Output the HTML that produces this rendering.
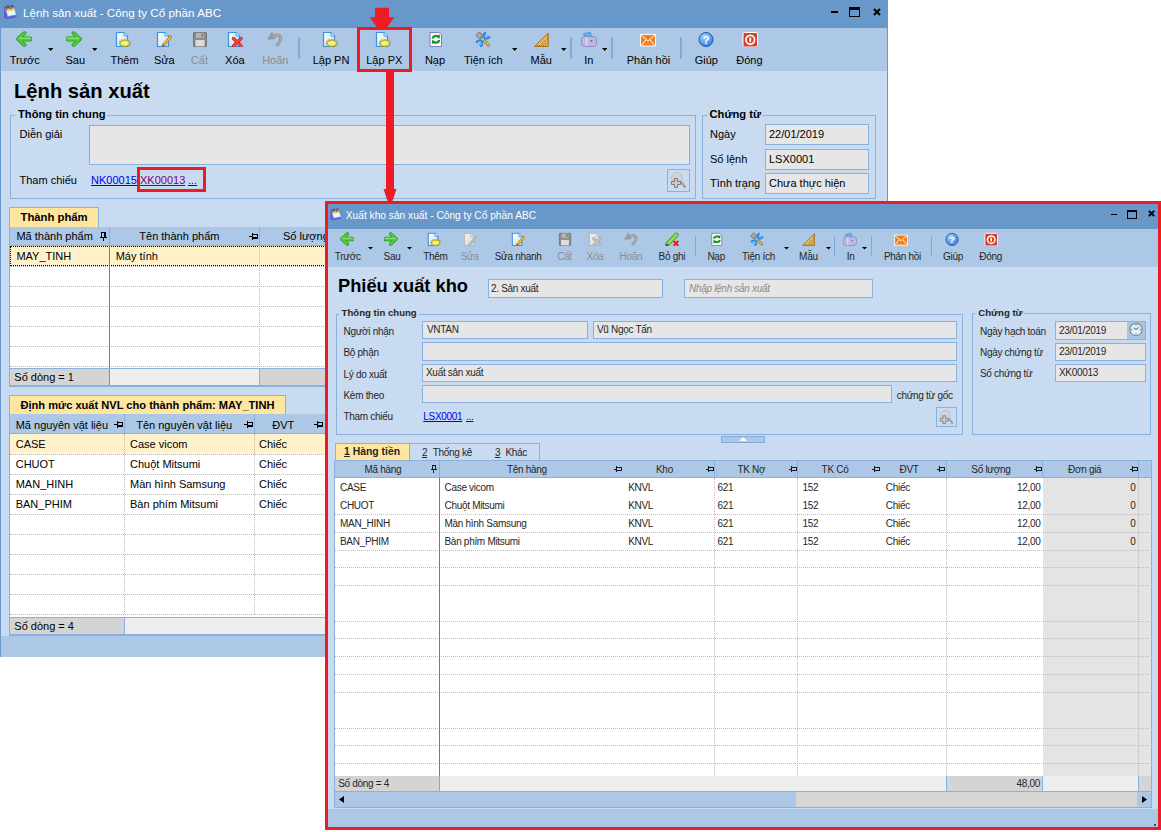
<!DOCTYPE html>
<html><head><meta charset="utf-8"><style>
html,body{margin:0;padding:0;}
body{width:1161px;height:832px;overflow:hidden;position:relative;background:#fff;font-family:"Liberation Sans", sans-serif;}
div{box-sizing:border-box;}
</style></head><body>
<div style="position:absolute;left:0px;top:0px;width:888px;height:657px;background:#c9dbf0"></div>
<div style="position:absolute;left:0px;top:0px;width:888px;height:28px;background:#6897c9"></div>
<svg style="position:absolute;left:0px;top:0px" width="24" height="24" viewBox="0 0 24 24"><path d="M4 6.5 L14 5.8 L16.8 15.5 L16.2 17.5 L7 19 L4 17.8 Z" fill="#6a58d0"/><path d="M5.6 8.6 L13.8 7 L16.6 14.8 L7.6 16.6 Z" fill="#eaf4ff" stroke="#48a4ec" stroke-width="0.7"/><path d="M5.6 8.6 L13.8 7 L14.7 9.9 L6.4 11.4 Z" fill="#f6d040"/><path d="M7 10 C6 5.5 8.6 3.6 9 9 M11 9.5 C10.4 4.5 13 3.6 13.2 8.6" fill="none" stroke="#505060" stroke-width="1.1"/></svg>
<div style="position:absolute;left:23.00px;top:7.10px;font-size:11.7px;line-height:11.7px;color:#fff;white-space:nowrap;">Lệnh sản xuất - Công ty Cổ phần ABC</div>
<div style="position:absolute;left:831px;top:11px;width:7px;height:2px;background:#000"></div>
<div style="position:absolute;left:849px;top:7px;width:11px;height:10px;border:1px solid #000;border-top:3px solid #000"></div>
<svg style="position:absolute;left:872.5px;top:7.5px" width="8" height="8" viewBox="0 0 8 8"><path d="M1 1 L7 7 M7 1 L1 7" stroke="#000" stroke-width="2.1"/></svg>
<div style="position:absolute;left:0px;top:28px;width:888px;height:43px;background:#adc8e6"></div>
<div style="position:absolute;left:0px;top:636px;width:888px;height:21px;background:#adc8e6"></div>
<div style="position:absolute;left:0px;top:0px;width:1px;height:657px;background:#6a98ca"></div>
<div style="position:absolute;left:887px;top:0px;width:1px;height:657px;background:#6a98ca"></div>
<svg style="position:absolute;left:16px;top:31px" width="16" height="16" viewBox="0 0 16 16"><path d="M8.4 2.2 L2.2 8 L8.4 13.8" fill="none" stroke="#2a9a20" stroke-width="3.9" stroke-linecap="round" stroke-linejoin="round"/><path d="M3.2 8 L14.2 8" fill="none" stroke="#2a9a20" stroke-width="4.9" stroke-linecap="round"/><path d="M8.4 2.2 L2.2 8 L8.4 13.8" fill="none" stroke="#52cc3c" stroke-width="2.3" stroke-linecap="round" stroke-linejoin="round"/><path d="M3.2 8 L14.2 8" fill="none" stroke="#52cc3c" stroke-width="3.3" stroke-linecap="round"/><path d="M3.2 8 L14.2 8" fill="none" stroke="#a8ee90" stroke-width="0.9" stroke-linecap="round" transform="translate(0,-0.8)"/></svg>
<div style="position:absolute;left:-15.20px;top:54.69px;width:80px;text-align:center;font-size:11px;line-height:11px;color:#000;white-space:nowrap;">Trước</div>
<svg style="position:absolute;left:47.8px;top:48px" width="5.5" height="3" viewBox="0 0 5.5 3"><path d="M0 0 L5.5 0 L2.75 3 Z" fill="#000"/></svg>
<svg style="position:absolute;left:66px;top:31px" width="16" height="16" viewBox="0 0 16 16"><path d="M7.6 2.2 L13.8 8 L7.6 13.8" fill="none" stroke="#2a9a20" stroke-width="3.9" stroke-linecap="round" stroke-linejoin="round"/><path d="M1.8 8 L12.8 8" fill="none" stroke="#2a9a20" stroke-width="4.9" stroke-linecap="round"/><path d="M7.6 2.2 L13.8 8 L7.6 13.8" fill="none" stroke="#52cc3c" stroke-width="2.3" stroke-linecap="round" stroke-linejoin="round"/><path d="M1.8 8 L12.8 8" fill="none" stroke="#52cc3c" stroke-width="3.3" stroke-linecap="round"/><path d="M1.8 8 L12.8 8" fill="none" stroke="#a8ee90" stroke-width="0.9" stroke-linecap="round" transform="translate(0,-0.8)"/></svg>
<div style="position:absolute;left:35.30px;top:54.69px;width:80px;text-align:center;font-size:11px;line-height:11px;color:#000;white-space:nowrap;">Sau</div>
<svg style="position:absolute;left:91.6px;top:48px" width="5.5" height="3" viewBox="0 0 5.5 3"><path d="M0 0 L5.5 0 L2.75 3 Z" fill="#000"/></svg>
<svg style="position:absolute;left:115px;top:31px" width="16" height="16" viewBox="0 0 16 16"><defs><linearGradient id="pg0" x1="0" y1="0" x2="1" y2="1"><stop offset="0" stop-color="#ffffff"/><stop offset="1" stop-color="#c4dcf4"/></linearGradient></defs><path d="M1.5 1.5 L9.0 1.5 L12.5 5 L12.5 15.5 L1.5 15.5 Z" fill="url(#pg0)" stroke="#3a92dc" stroke-width="1.2"/><path d="M9.0 1.5 L9.0 5 L12.5 5" fill="#eaf4fc" stroke="#3a92dc" stroke-width="0.9"/><polygon points="16.00,12.20 14.11,12.98 15.17,14.30 12.96,14.34 12.90,15.84 10.96,15.12 9.80,16.40 8.64,15.12 6.70,15.84 6.64,14.34 4.43,14.30 5.49,12.98 3.60,12.20 5.49,11.42 4.43,10.10 6.64,10.06 6.70,8.56 8.64,9.28 9.80,8.00 10.96,9.28 12.90,8.56 12.96,10.06 15.17,10.10 14.11,11.42" fill="#c8c020" stroke="#98901a" stroke-width="0.5"/><ellipse cx="9.8" cy="12.2" rx="3.844" ry="2.3100000000000005" fill="#f6f080"/></svg>
<div style="position:absolute;left:84.50px;top:54.69px;width:80px;text-align:center;font-size:11px;line-height:11px;color:#000;white-space:nowrap;">Thêm</div>
<svg style="position:absolute;left:156px;top:31px" width="16" height="16" viewBox="0 0 16 16"><defs><linearGradient id="pg0" x1="0" y1="0" x2="1" y2="1"><stop offset="0" stop-color="#ffffff"/><stop offset="1" stop-color="#c4dcf4"/></linearGradient></defs><path d="M1.5 1.5 L9.0 1.5 L12.5 5 L12.5 15.5 L1.5 15.5 Z" fill="url(#pg0)" stroke="#3a92dc" stroke-width="1.2"/><path d="M9.0 1.5 L9.0 5 L12.5 5" fill="#eaf4fc" stroke="#3a92dc" stroke-width="0.9"/><path d="M6.8 13.2 L14.2 4.5 L16 6.2 L8.6 14.8 L6.3 15.3 Z" fill="#f2bc30" stroke="#a87010" stroke-width="0.8"/><path d="M6.3 15.3 L6.9 13.6 L8 14.7 Z" fill="#202020"/></svg>
<div style="position:absolute;left:124.30px;top:54.69px;width:80px;text-align:center;font-size:11px;line-height:11px;color:#000;white-space:nowrap;">Sửa</div>
<svg style="position:absolute;left:192px;top:31px" width="16" height="16" viewBox="0 0 16 16"><rect x="1.5" y="1.5" width="13" height="14" rx="0.5" fill="#8c8c8c" stroke="#707070" stroke-width="0.9"/><rect x="4" y="1.8" width="8" height="5" fill="#b4b4b4"/><rect x="9.5" y="2.5" width="1.6" height="3" fill="#707070"/><rect x="3.5" y="9" width="9" height="6.3" fill="#dcdcdc"/></svg>
<div style="position:absolute;left:159.40px;top:54.69px;width:80px;text-align:center;font-size:11px;line-height:11px;color:#8d8d8d;white-space:nowrap;">Cất</div>
<svg style="position:absolute;left:227px;top:31px" width="16" height="16" viewBox="0 0 16 16"><defs><linearGradient id="pg0" x1="0" y1="0" x2="1" y2="1"><stop offset="0" stop-color="#ffffff"/><stop offset="1" stop-color="#c4dcf4"/></linearGradient></defs><path d="M1.5 1.5 L9.0 1.5 L12.5 5 L12.5 15.5 L1.5 15.5 Z" fill="url(#pg0)" stroke="#3a92dc" stroke-width="1.2"/><path d="M9.0 1.5 L9.0 5 L12.5 5" fill="#eaf4fc" stroke="#3a92dc" stroke-width="0.9"/><path d="M6.5 7.5 L14 15 M14 7.5 L6.5 15" stroke="#c81818" stroke-width="3.2" stroke-linecap="round"/><path d="M6.5 7.5 L14 15 M14 7.5 L6.5 15" stroke="#ee4848" stroke-width="1.8" stroke-linecap="round"/></svg>
<div style="position:absolute;left:194.90px;top:54.69px;width:80px;text-align:center;font-size:11px;line-height:11px;color:#000;white-space:nowrap;">Xóa</div>
<svg style="position:absolute;left:267px;top:31px" width="16" height="16" viewBox="0 0 16 16"><path d="M6 6 C9 3 13.5 3.5 13.8 7.5 C14 10.5 11 12.5 9.5 15" fill="none" stroke="#8c8c8c" stroke-width="3"/><path d="M0.8 8.2 L5 1.2 L8.2 7.6 Z" fill="#9c9c9c" stroke="#8a8a8a" stroke-width="0.6"/><path d="M6 6 C9 3 13.5 3.5 13.8 7.5 C14 10.5 11 12.5 9.5 15" fill="none" stroke="#b0b0b0" stroke-width="1.4"/></svg>
<div style="position:absolute;left:235.30px;top:54.69px;width:80px;text-align:center;font-size:11px;line-height:11px;color:#8d8d8d;white-space:nowrap;">Hoãn</div>
<div style="position:absolute;left:298px;top:37px;width:2px;height:22px;background:#86aad8"></div>
<svg style="position:absolute;left:322px;top:31px" width="16" height="16" viewBox="0 0 16 16"><defs><linearGradient id="pg0" x1="0" y1="0" x2="1" y2="1"><stop offset="0" stop-color="#ffffff"/><stop offset="1" stop-color="#c4dcf4"/></linearGradient></defs><path d="M1.5 1.5 L9.0 1.5 L12.5 5 L12.5 15.5 L1.5 15.5 Z" fill="url(#pg0)" stroke="#3a92dc" stroke-width="1.2"/><path d="M9.0 1.5 L9.0 5 L12.5 5" fill="#eaf4fc" stroke="#3a92dc" stroke-width="0.9"/><polygon points="16.00,12.20 14.11,12.98 15.17,14.30 12.96,14.34 12.90,15.84 10.96,15.12 9.80,16.40 8.64,15.12 6.70,15.84 6.64,14.34 4.43,14.30 5.49,12.98 3.60,12.20 5.49,11.42 4.43,10.10 6.64,10.06 6.70,8.56 8.64,9.28 9.80,8.00 10.96,9.28 12.90,8.56 12.96,10.06 15.17,10.10 14.11,11.42" fill="#c8c020" stroke="#98901a" stroke-width="0.5"/><ellipse cx="9.8" cy="12.2" rx="3.844" ry="2.3100000000000005" fill="#f6f080"/></svg>
<div style="position:absolute;left:291.00px;top:54.69px;width:80px;text-align:center;font-size:11px;line-height:11px;color:#000;white-space:nowrap;">Lập PN</div>
<svg style="position:absolute;left:375px;top:31px" width="16" height="16" viewBox="0 0 16 16"><defs><linearGradient id="pg0" x1="0" y1="0" x2="1" y2="1"><stop offset="0" stop-color="#ffffff"/><stop offset="1" stop-color="#c4dcf4"/></linearGradient></defs><path d="M1.5 1.5 L9.0 1.5 L12.5 5 L12.5 15.5 L1.5 15.5 Z" fill="url(#pg0)" stroke="#3a92dc" stroke-width="1.2"/><path d="M9.0 1.5 L9.0 5 L12.5 5" fill="#eaf4fc" stroke="#3a92dc" stroke-width="0.9"/><polygon points="16.00,12.20 14.11,12.98 15.17,14.30 12.96,14.34 12.90,15.84 10.96,15.12 9.80,16.40 8.64,15.12 6.70,15.84 6.64,14.34 4.43,14.30 5.49,12.98 3.60,12.20 5.49,11.42 4.43,10.10 6.64,10.06 6.70,8.56 8.64,9.28 9.80,8.00 10.96,9.28 12.90,8.56 12.96,10.06 15.17,10.10 14.11,11.42" fill="#c8c020" stroke="#98901a" stroke-width="0.5"/><ellipse cx="9.8" cy="12.2" rx="3.844" ry="2.3100000000000005" fill="#f6f080"/></svg>
<div style="position:absolute;left:344.30px;top:54.69px;width:80px;text-align:center;font-size:11px;line-height:11px;color:#000;white-space:nowrap;">Lập PX</div>
<svg style="position:absolute;left:428px;top:31px" width="16" height="16" viewBox="0 0 16 16"><path d="M2 1.5 L11 1.5 L13.5 4 L13.5 15.5 L2 15.5 Z" fill="#f8faff" stroke="#7a80b8" stroke-width="1"/><path d="M4.8 7.6 C4.8 4.8 9.2 4 10.4 6.2" fill="none" stroke="#109a20" stroke-width="2.3"/><path d="M11 9 C11 11.8 6.6 12.6 5.4 10.4" fill="none" stroke="#109a20" stroke-width="2.3"/><path d="M8 5 L12 3.6 L11.6 8 Z M7.8 11.6 L3.8 13 L4.2 8.6 Z" fill="#109a20"/></svg>
<div style="position:absolute;left:395.00px;top:54.69px;width:80px;text-align:center;font-size:11px;line-height:11px;color:#000;white-space:nowrap;">Nạp</div>
<svg style="position:absolute;left:475px;top:31px" width="16" height="16" viewBox="0 0 16 16"><path d="M5.5 5.5 L13.5 14.2" stroke="#a06c18" stroke-width="2.8" stroke-linecap="round"/><path d="M5.5 5.5 L13.5 14.2" stroke="#eac462" stroke-width="1.4" stroke-linecap="round"/><path d="M0.8 4.5 L4.2 1 L7.8 4 L4.4 7.8 Z" fill="#a8a8a8" stroke="#6c6c6c" stroke-width="0.9"/><path d="M3 13 L12 4.2" stroke="#2e88de" stroke-width="3"/><path d="M3 13 L12 4.2" stroke="#c8e6ff" stroke-width="1.2"/><path d="M11.2 1.6 A3 3 0 1 0 14.6 5" fill="none" stroke="#2e88de" stroke-width="1.8"/><path d="M4.8 15.4 A3 3 0 1 0 1.4 12" fill="none" stroke="#2e88de" stroke-width="1.8"/></svg>
<div style="position:absolute;left:443.30px;top:54.69px;width:80px;text-align:center;font-size:11px;line-height:11px;color:#000;white-space:nowrap;">Tiện ích</div>
<svg style="position:absolute;left:511.5px;top:48px" width="5.5" height="3" viewBox="0 0 5.5 3"><path d="M0 0 L5.5 0 L2.75 3 Z" fill="#000"/></svg>
<svg style="position:absolute;left:533.5px;top:31px" width="16" height="16" viewBox="0 0 16 16"><path d="M14.2 2 L14.2 15.5 L0.6 15.5 Z" fill="#e8b84c" stroke="#a06a18" stroke-width="0.9" stroke-linejoin="round"/><path d="M11.2 9.3 L11.2 12.6 L7.9 12.6 Z" fill="#c9dbf0" stroke="#a06a18" stroke-width="0.6"/><path d="M3.5 15 L3.5 14 M5.5 15 L5.5 14 M7.5 15 L7.5 14 M9.5 15 L9.5 14 M11.5 15 L11.5 14 M13.8 4.5 L12.8 4.5 M13.8 6.5 L12.8 6.5 M13.8 8.5 L12.8 8.5 M13.8 10.5 L12.8 10.5 M13.8 12.5 L12.8 12.5" stroke="#8a5810" stroke-width="0.7"/></svg>
<div style="position:absolute;left:501.20px;top:54.69px;width:80px;text-align:center;font-size:11px;line-height:11px;color:#000;white-space:nowrap;">Mẫu</div>
<svg style="position:absolute;left:561px;top:48px" width="5.5" height="3" viewBox="0 0 5.5 3"><path d="M0 0 L5.5 0 L2.75 3 Z" fill="#000"/></svg>
<div style="position:absolute;left:570px;top:37px;width:2px;height:22px;background:#86aad8"></div>
<svg style="position:absolute;left:580.5px;top:31px" width="16" height="16" viewBox="0 0 16 16"><path d="M2.5 2.5 L9.5 1.2 L11 6.5 L4 7.8 Z" fill="#58b4ec" stroke="#3a8ed0" stroke-width="0.6"/><rect x="0.5" y="5.5" width="15" height="10" rx="3.2" fill="#bcb8e6" stroke="#8a84c0" stroke-width="0.9"/><path d="M5.5 6 L5.5 15" stroke="#e0def6" stroke-width="1.2"/><circle cx="10.5" cy="10" r="0.9" fill="#6a64a0"/></svg>
<div style="position:absolute;left:548.90px;top:54.69px;width:80px;text-align:center;font-size:11px;line-height:11px;color:#000;white-space:nowrap;">In</div>
<svg style="position:absolute;left:601.5px;top:48px" width="5.5" height="3" viewBox="0 0 5.5 3"><path d="M0 0 L5.5 0 L2.75 3 Z" fill="#000"/></svg>
<div style="position:absolute;left:611px;top:37px;width:2px;height:22px;background:#86aad8"></div>
<svg style="position:absolute;left:640px;top:31px" width="16" height="16" viewBox="0 0 16 16"><rect x="0.5" y="3.5" width="15" height="11.5" fill="#f28020" stroke="#fff" stroke-width="0.9"/><path d="M1 4 L8 10 L15 4 M1 14.5 L6 9 M15 14.5 L10 9" fill="none" stroke="#fff" stroke-width="1"/></svg>
<div style="position:absolute;left:608.50px;top:54.69px;width:80px;text-align:center;font-size:11px;line-height:11px;color:#000;white-space:nowrap;">Phản hồi</div>
<div style="position:absolute;left:680px;top:37px;width:2px;height:22px;background:#86aad8"></div>
<svg style="position:absolute;left:697.5px;top:31px" width="16" height="16" viewBox="0 0 16 16"><defs><radialGradient id="hg" cx="0.4" cy="0.3" r="0.8"><stop offset="0" stop-color="#a8d4ff"/><stop offset="1" stop-color="#2a78d8"/></radialGradient></defs><circle cx="8" cy="8.5" r="7" fill="url(#hg)" stroke="#1a58a8" stroke-width="1"/><text x="8" y="12.6" font-size="11" font-weight="bold" text-anchor="middle" fill="#fff" font-family="Liberation Sans">?</text></svg>
<div style="position:absolute;left:666.30px;top:54.69px;width:80px;text-align:center;font-size:11px;line-height:11px;color:#000;white-space:nowrap;">Giúp</div>
<svg style="position:absolute;left:741.5px;top:31px" width="16" height="16" viewBox="0 0 16 16"><rect x="1" y="1.5" width="14.5" height="14.5" rx="1.5" fill="#d84028" stroke="#fff" stroke-width="1"/><circle cx="8.25" cy="8.75" r="4.3" fill="none" stroke="#fff" stroke-width="1.7"/><path d="M8.25 6.6 L8.25 10.9" stroke="#fff" stroke-width="1.8"/></svg>
<div style="position:absolute;left:709.40px;top:54.69px;width:80px;text-align:center;font-size:11px;line-height:11px;color:#000;white-space:nowrap;">Đóng</div>
<div style="position:absolute;left:14.00px;top:80.50px;font-size:20.2px;line-height:20.2px;font-weight:bold;color:#000;white-space:nowrap;">Lệnh sản xuất</div>
<div style="position:absolute;left:10px;top:115px;width:686px;height:84px;box-sizing:border-box;border:1px solid #8cb0dc"></div>
<div style="position:absolute;left:15px;top:109px;width:92px;height:12px;background:#c9dbf0"></div>
<div style="position:absolute;left:18.00px;top:109.02px;font-size:11.2px;line-height:11.2px;font-weight:bold;color:#000;white-space:nowrap;">Thông tin chung</div>
<div style="position:absolute;left:19.50px;top:128.69px;font-size:11px;line-height:11px;color:#000;white-space:nowrap;">Diễn giải</div>
<div style="position:absolute;left:89px;top:125px;width:601px;height:40px;background:#e6e6e6;box-sizing:border-box;border:1px solid #8ab0de"></div>
<div style="position:absolute;left:19.50px;top:174.69px;font-size:11px;line-height:11px;color:#000;white-space:nowrap;">Tham chiếu</div>
<div style="position:absolute;left:91.00px;top:174.69px;font-size:11px;line-height:11px;color:#0000ee;white-space:nowrap;text-decoration:underline;">NK00015</div>
<div style="position:absolute;left:140.00px;top:174.69px;font-size:11px;line-height:11px;color:#800080;white-space:nowrap;text-decoration:underline;">XK00013</div>
<div style="position:absolute;left:188.00px;top:174.69px;font-size:11px;line-height:11px;color:#0000ee;white-space:nowrap;text-decoration:underline;">...</div>
<div style="position:absolute;left:667px;top:169px;width:23px;height:23px;box-sizing:border-box;border:1px solid #8ab0de;background:#c9dbf0"></div>
<svg style="position:absolute;left:670px;top:172px" width="17" height="17" viewBox="0 0 17 17"><circle cx="7" cy="5.8" r="5.3" fill="#d4d4d4" stroke="#bdbdbd" stroke-width="1"/><path d="M11.3 10.3 L15 14.8" stroke="#a4a4a4" stroke-width="2.6" stroke-linecap="round"/><path d="M4.5 6.5 H7.5 V9.5 H10.5 V12.5 H7.5 V15.5 H4.5 V12.5 H1.5 V9.5 H4.5 Z" fill="#cacaca" stroke="#7c7c7c" stroke-width="1"/></svg>
<div style="position:absolute;left:702px;top:115px;width:174px;height:84px;box-sizing:border-box;border:1px solid #8cb0dc"></div>
<div style="position:absolute;left:706.5px;top:109px;width:55px;height:12px;background:#c9dbf0"></div>
<div style="position:absolute;left:709.50px;top:109.02px;font-size:11.2px;line-height:11.2px;font-weight:bold;color:#000;white-space:nowrap;">Chứng từ</div>
<div style="position:absolute;left:710.00px;top:128.69px;font-size:11px;line-height:11px;color:#000;white-space:nowrap;">Ngày</div>
<div style="position:absolute;left:710.00px;top:153.89px;font-size:11px;line-height:11px;color:#000;white-space:nowrap;">Số lệnh</div>
<div style="position:absolute;left:710.00px;top:177.69px;font-size:11px;line-height:11px;color:#000;white-space:nowrap;">Tình trạng</div>
<div style="position:absolute;left:765px;top:124px;width:104px;height:21px;background:#e6e6e6;box-sizing:border-box;border:1px solid #8ab0de"></div>
<div style="position:absolute;left:769.00px;top:129.15px;font-size:11px;line-height:11px;color:#000;white-space:nowrap;">22/01/2019</div>
<div style="position:absolute;left:765px;top:149px;width:104px;height:21px;background:#e6e6e6;box-sizing:border-box;border:1px solid #8ab0de"></div>
<div style="position:absolute;left:769.00px;top:154.15px;font-size:11px;line-height:11px;color:#000;white-space:nowrap;">LSX0001</div>
<div style="position:absolute;left:765px;top:173px;width:104px;height:21px;background:#e6e6e6;box-sizing:border-box;border:1px solid #8ab0de"></div>
<div style="position:absolute;left:769.00px;top:178.15px;font-size:11px;line-height:11px;color:#000;white-space:nowrap;">Chưa thực hiện</div>
<div style="position:absolute;left:9px;top:207px;width:90px;height:21px;background:#ffe6a0;border:1px solid #8cb0dc;border-bottom:none"></div>
<div style="position:absolute;left:20.50px;top:211.93px;font-size:11.3px;line-height:11.3px;font-weight:bold;color:#000;white-space:nowrap;">Thành phẩm</div>
<div style="position:absolute;left:9px;top:227px;width:321px;height:160px;background:#fff;border:1px solid #8cb0dc;border-right:none"></div>
<div style="position:absolute;left:10px;top:227px;width:320px;height:19px;background:#adc8e6;border-bottom:1px solid #8cb0dc"></div>
<div style="position:absolute;left:109px;top:227px;width:1px;height:19px;background:#8cb0dc"></div>
<div style="position:absolute;left:259px;top:227px;width:1px;height:19px;background:#8cb0dc"></div>
<div style="position:absolute;left:16.40px;top:231.19px;font-size:11px;line-height:11px;color:#000;white-space:nowrap;">Mã thành phẩm</div>
<div style="position:absolute;left:101px;top:232px;width:5px;height:1px;background:#000"></div>
<div style="position:absolute;left:101px;top:232px;width:1px;height:5px;background:#000"></div>
<div style="position:absolute;left:104px;top:232px;width:2px;height:5px;background:#000"></div>
<div style="position:absolute;left:100px;top:237px;width:7px;height:1px;background:#000"></div>
<div style="position:absolute;left:103px;top:238px;width:1px;height:3px;background:#000"></div>
<div style="position:absolute;left:139.30px;top:231.19px;font-size:11px;line-height:11px;color:#000;white-space:nowrap;">Tên thành phẩm</div>
<div style="position:absolute;left:249px;top:236px;width:3px;height:1px;background:#000"></div>
<div style="position:absolute;left:252px;top:233px;width:1px;height:7px;background:#000"></div>
<div style="position:absolute;left:252px;top:234px;width:6px;height:1px;background:#000"></div>
<div style="position:absolute;left:252px;top:237px;width:6px;height:2px;background:#000"></div>
<div style="position:absolute;left:257px;top:234px;width:1px;height:5px;background:#000"></div>
<div style="position:absolute;left:283.00px;top:231.19px;font-size:11px;line-height:11px;color:#000;white-space:nowrap;">Số lượng</div>
<div style="position:absolute;left:10px;top:246px;width:320px;height:20px;background:#fff2cb"></div>
<div style="position:absolute;left:10px;top:266px;width:320px;height:1px;border-top:1px dotted #b8b8b8"></div>
<div style="position:absolute;left:10px;top:286px;width:320px;height:1px;border-top:1px dotted #b8b8b8"></div>
<div style="position:absolute;left:10px;top:306px;width:320px;height:1px;border-top:1px dotted #b8b8b8"></div>
<div style="position:absolute;left:10px;top:326px;width:320px;height:1px;border-top:1px dotted #b8b8b8"></div>
<div style="position:absolute;left:10px;top:346px;width:320px;height:1px;border-top:1px dotted #b8b8b8"></div>
<div style="position:absolute;left:10px;top:366px;width:320px;height:1px;border-top:1px dotted #b8b8b8"></div>
<div style="position:absolute;left:10px;top:246px;width:320px;height:20px;border:1px dotted #000"></div>
<div style="position:absolute;left:109px;top:246px;width:1px;height:123px;background:#808080"></div>
<div style="position:absolute;left:259px;top:266px;width:1px;height:103px;border-left:1px dotted #b8b8b8"></div>
<div style="position:absolute;left:259px;top:246px;width:1px;height:20px;border-left:1px dotted #b8b8b8"></div>
<div style="position:absolute;left:16.40px;top:251.19px;font-size:11px;line-height:11px;color:#000;white-space:nowrap;">MAY_TINH</div>
<div style="position:absolute;left:115.70px;top:251.19px;font-size:11px;line-height:11px;color:#000;white-space:nowrap;">Máy tính</div>
<div style="position:absolute;left:10px;top:368px;width:320px;height:1px;background:#8cb0dc"></div>
<div style="position:absolute;left:10px;top:369px;width:99px;height:16px;background:#d4d4d4"></div>
<div style="position:absolute;left:109px;top:369px;width:1px;height:16px;background:#909090"></div>
<div style="position:absolute;left:110px;top:369px;width:220px;height:16px;background:#eeeeee"></div>
<div style="position:absolute;left:259px;top:369px;width:70px;height:16px;background:#d4d4d4"></div>
<div style="position:absolute;left:259px;top:369px;width:1px;height:16px;background:#8cb0dc"></div>
<div style="position:absolute;left:14.30px;top:371.69px;font-size:11px;line-height:11px;color:#000;white-space:nowrap;">Số dòng = 1</div>
<div style="position:absolute;left:9px;top:385px;width:321px;height:2px;background:#8cb0dc"></div>
<div style="position:absolute;left:9px;top:395px;width:277px;height:20px;background:#ffe6a0;border:1px solid #8cb0dc;border-bottom:none"></div>
<div style="position:absolute;left:20.50px;top:400.10px;font-size:11.1px;line-height:11.1px;font-weight:bold;color:#000;white-space:nowrap;">Định mức xuất NVL cho thành phẩm: MAY_TINH</div>
<div style="position:absolute;left:9px;top:414px;width:321px;height:221px;background:#fff;border:1px solid #8cb0dc;border-right:none"></div>
<div style="position:absolute;left:10px;top:414px;width:320px;height:20px;background:#adc8e6;border-bottom:1px solid #8cb0dc"></div>
<div style="position:absolute;left:124px;top:414px;width:1px;height:20px;background:#8cb0dc"></div>
<div style="position:absolute;left:254px;top:414px;width:1px;height:20px;background:#8cb0dc"></div>
<div style="position:absolute;left:15.70px;top:419.99px;font-size:11px;line-height:11px;color:#000;white-space:nowrap;">Mã nguyên vật liệu</div>
<div style="position:absolute;left:114px;top:424px;width:3px;height:1px;background:#000"></div>
<div style="position:absolute;left:117px;top:421px;width:1px;height:7px;background:#000"></div>
<div style="position:absolute;left:117px;top:422px;width:6px;height:1px;background:#000"></div>
<div style="position:absolute;left:117px;top:425px;width:6px;height:2px;background:#000"></div>
<div style="position:absolute;left:122px;top:422px;width:1px;height:5px;background:#000"></div>
<div style="position:absolute;left:136.20px;top:419.99px;font-size:11px;line-height:11px;color:#000;white-space:nowrap;">Tên nguyên vật liệu</div>
<div style="position:absolute;left:244px;top:424px;width:3px;height:1px;background:#000"></div>
<div style="position:absolute;left:247px;top:421px;width:1px;height:7px;background:#000"></div>
<div style="position:absolute;left:247px;top:422px;width:6px;height:1px;background:#000"></div>
<div style="position:absolute;left:247px;top:425px;width:6px;height:2px;background:#000"></div>
<div style="position:absolute;left:252px;top:422px;width:1px;height:5px;background:#000"></div>
<div style="position:absolute;left:272.30px;top:419.99px;font-size:11px;line-height:11px;color:#000;white-space:nowrap;">ĐVT</div>
<div style="position:absolute;left:314px;top:424px;width:3px;height:1px;background:#000"></div>
<div style="position:absolute;left:317px;top:421px;width:1px;height:7px;background:#000"></div>
<div style="position:absolute;left:317px;top:422px;width:6px;height:1px;background:#000"></div>
<div style="position:absolute;left:317px;top:425px;width:6px;height:2px;background:#000"></div>
<div style="position:absolute;left:322px;top:422px;width:1px;height:5px;background:#000"></div>
<div style="position:absolute;left:10px;top:434px;width:320px;height:20px;background:#fff2cb"></div>
<div style="position:absolute;left:10px;top:454px;width:320px;height:1px;border-top:1px dotted #b8b8b8"></div>
<div style="position:absolute;left:10px;top:474px;width:320px;height:1px;border-top:1px dotted #b8b8b8"></div>
<div style="position:absolute;left:10px;top:494px;width:320px;height:1px;border-top:1px dotted #b8b8b8"></div>
<div style="position:absolute;left:10px;top:514px;width:320px;height:1px;border-top:1px dotted #b8b8b8"></div>
<div style="position:absolute;left:10px;top:534px;width:320px;height:1px;border-top:1px dotted #b8b8b8"></div>
<div style="position:absolute;left:10px;top:554px;width:320px;height:1px;border-top:1px dotted #b8b8b8"></div>
<div style="position:absolute;left:10px;top:574px;width:320px;height:1px;border-top:1px dotted #b8b8b8"></div>
<div style="position:absolute;left:10px;top:594px;width:320px;height:1px;border-top:1px dotted #b8b8b8"></div>
<div style="position:absolute;left:10px;top:614px;width:320px;height:1px;border-top:1px dotted #b8b8b8"></div>
<div style="position:absolute;left:124px;top:434px;width:1px;height:180px;border-left:1px dotted #b8b8b8"></div>
<div style="position:absolute;left:254px;top:434px;width:1px;height:180px;border-left:1px dotted #b8b8b8"></div>
<div style="position:absolute;left:15.70px;top:439.19px;font-size:11px;line-height:11px;color:#000;white-space:nowrap;">CASE</div>
<div style="position:absolute;left:130.00px;top:439.19px;font-size:11px;line-height:11px;color:#000;white-space:nowrap;">Case vicom</div>
<div style="position:absolute;left:259.00px;top:439.19px;font-size:11px;line-height:11px;color:#000;white-space:nowrap;">Chiếc</div>
<div style="position:absolute;left:15.70px;top:459.19px;font-size:11px;line-height:11px;color:#000;white-space:nowrap;">CHUOT</div>
<div style="position:absolute;left:130.00px;top:459.19px;font-size:11px;line-height:11px;color:#000;white-space:nowrap;">Chuột Mitsumi</div>
<div style="position:absolute;left:259.00px;top:459.19px;font-size:11px;line-height:11px;color:#000;white-space:nowrap;">Chiếc</div>
<div style="position:absolute;left:15.70px;top:479.19px;font-size:11px;line-height:11px;color:#000;white-space:nowrap;">MAN_HINH</div>
<div style="position:absolute;left:130.00px;top:479.19px;font-size:11px;line-height:11px;color:#000;white-space:nowrap;">Màn hình Samsung</div>
<div style="position:absolute;left:259.00px;top:479.19px;font-size:11px;line-height:11px;color:#000;white-space:nowrap;">Chiếc</div>
<div style="position:absolute;left:15.70px;top:499.19px;font-size:11px;line-height:11px;color:#000;white-space:nowrap;">BAN_PHIM</div>
<div style="position:absolute;left:130.00px;top:499.19px;font-size:11px;line-height:11px;color:#000;white-space:nowrap;">Bàn phím Mitsumi</div>
<div style="position:absolute;left:259.00px;top:499.19px;font-size:11px;line-height:11px;color:#000;white-space:nowrap;">Chiếc</div>
<div style="position:absolute;left:10px;top:617px;width:320px;height:1px;background:#8cb0dc"></div>
<div style="position:absolute;left:10px;top:618px;width:320px;height:16px;background:#eeeeee"></div>
<div style="position:absolute;left:10px;top:618px;width:114px;height:16px;background:#d4d4d4"></div>
<div style="position:absolute;left:124px;top:618px;width:1px;height:16px;background:#8cb0dc"></div>
<div style="position:absolute;left:14.30px;top:620.69px;font-size:11px;line-height:11px;color:#000;white-space:nowrap;">Số dòng = 4</div>
<div style="position:absolute;left:9px;top:634px;width:321px;height:2px;background:#8cb0dc"></div>
<div style="position:absolute;left:325px;top:201px;width:836px;height:629px;border:3px solid #ed1c24;background:#c9dbf0"></div>
<div style="position:absolute;left:328px;top:204px;width:830px;height:25px;background:#6897c9"></div>
<svg style="position:absolute;left:326.6px;top:203.6px" width="20.6" height="20.6" viewBox="0 0 24 24"><path d="M4 6.5 L14 5.8 L16.8 15.5 L16.2 17.5 L7 19 L4 17.8 Z" fill="#6a58d0"/><path d="M5.6 8.6 L13.8 7 L16.6 14.8 L7.6 16.6 Z" fill="#eaf4ff" stroke="#48a4ec" stroke-width="0.7"/><path d="M5.6 8.6 L13.8 7 L14.7 9.9 L6.4 11.4 Z" fill="#f6d040"/><path d="M7 10 C6 5.5 8.6 3.6 9 9 M11 9.5 C10.4 4.5 13 3.6 13.2 8.6" fill="none" stroke="#505060" stroke-width="1.1"/></svg>
<div style="position:absolute;left:345.80px;top:210.87px;font-size:10.2px;line-height:10.2px;color:#fff;white-space:nowrap;">Xuất kho sản xuất - Công ty Cổ phần ABC</div>
<div style="position:absolute;left:1111px;top:214px;width:6px;height:1px;background:#000"></div>
<div style="position:absolute;left:1127px;top:210px;width:10px;height:9px;border:1px solid #000;border-top:2px solid #000"></div>
<svg style="position:absolute;left:1148px;top:210px" width="7" height="7" viewBox="0 0 7 7"><path d="M0.8 0.8 L6.2 6.2 M6.2 0.8 L0.8 6.2" stroke="#000" stroke-width="1.9"/></svg>
<div style="position:absolute;left:328px;top:229px;width:830px;height:38px;background:#adc8e6"></div>
<div style="position:absolute;left:328px;top:809px;width:830px;height:18px;background:#adc8e6"></div>
<svg style="position:absolute;left:340px;top:232px" width="14" height="14" viewBox="0 0 16 16"><path d="M8.4 2.2 L2.2 8 L8.4 13.8" fill="none" stroke="#2a9a20" stroke-width="3.9" stroke-linecap="round" stroke-linejoin="round"/><path d="M3.2 8 L14.2 8" fill="none" stroke="#2a9a20" stroke-width="4.9" stroke-linecap="round"/><path d="M8.4 2.2 L2.2 8 L8.4 13.8" fill="none" stroke="#52cc3c" stroke-width="2.3" stroke-linecap="round" stroke-linejoin="round"/><path d="M3.2 8 L14.2 8" fill="none" stroke="#52cc3c" stroke-width="3.3" stroke-linecap="round"/><path d="M3.2 8 L14.2 8" fill="none" stroke="#a8ee90" stroke-width="0.9" stroke-linecap="round" transform="translate(0,-0.8)"/></svg>
<div style="position:absolute;left:307.70px;top:252.03px;width:80px;text-align:center;font-size:10px;line-height:10px;color:#262626;white-space:nowrap;letter-spacing:-0.3px;">Trước</div>
<svg style="position:absolute;left:368px;top:247px" width="5" height="2.5" viewBox="0 0 5 2.5"><path d="M0 0 L5 0 L2.5 2.5 Z" fill="#000"/></svg>
<svg style="position:absolute;left:384px;top:232px" width="14" height="14" viewBox="0 0 16 16"><path d="M7.6 2.2 L13.8 8 L7.6 13.8" fill="none" stroke="#2a9a20" stroke-width="3.9" stroke-linecap="round" stroke-linejoin="round"/><path d="M1.8 8 L12.8 8" fill="none" stroke="#2a9a20" stroke-width="4.9" stroke-linecap="round"/><path d="M7.6 2.2 L13.8 8 L7.6 13.8" fill="none" stroke="#52cc3c" stroke-width="2.3" stroke-linecap="round" stroke-linejoin="round"/><path d="M1.8 8 L12.8 8" fill="none" stroke="#52cc3c" stroke-width="3.3" stroke-linecap="round"/><path d="M1.8 8 L12.8 8" fill="none" stroke="#a8ee90" stroke-width="0.9" stroke-linecap="round" transform="translate(0,-0.8)"/></svg>
<div style="position:absolute;left:352.00px;top:252.03px;width:80px;text-align:center;font-size:10px;line-height:10px;color:#262626;white-space:nowrap;letter-spacing:-0.3px;">Sau</div>
<svg style="position:absolute;left:406.5px;top:247px" width="5" height="2.5" viewBox="0 0 5 2.5"><path d="M0 0 L5 0 L2.5 2.5 Z" fill="#000"/></svg>
<svg style="position:absolute;left:427px;top:232px" width="14" height="14" viewBox="0 0 16 16"><defs><linearGradient id="pg0" x1="0" y1="0" x2="1" y2="1"><stop offset="0" stop-color="#ffffff"/><stop offset="1" stop-color="#c4dcf4"/></linearGradient></defs><path d="M1.5 1.5 L9.0 1.5 L12.5 5 L12.5 15.5 L1.5 15.5 Z" fill="url(#pg0)" stroke="#3a92dc" stroke-width="1.2"/><path d="M9.0 1.5 L9.0 5 L12.5 5" fill="#eaf4fc" stroke="#3a92dc" stroke-width="0.9"/><polygon points="16.00,12.20 14.11,12.98 15.17,14.30 12.96,14.34 12.90,15.84 10.96,15.12 9.80,16.40 8.64,15.12 6.70,15.84 6.64,14.34 4.43,14.30 5.49,12.98 3.60,12.20 5.49,11.42 4.43,10.10 6.64,10.06 6.70,8.56 8.64,9.28 9.80,8.00 10.96,9.28 12.90,8.56 12.96,10.06 15.17,10.10 14.11,11.42" fill="#c8c020" stroke="#98901a" stroke-width="0.5"/><ellipse cx="9.8" cy="12.2" rx="3.844" ry="2.3100000000000005" fill="#f6f080"/></svg>
<div style="position:absolute;left:395.40px;top:252.03px;width:80px;text-align:center;font-size:10px;line-height:10px;color:#262626;white-space:nowrap;letter-spacing:-0.3px;">Thêm</div>
<svg style="position:absolute;left:463px;top:232px" width="14" height="14" viewBox="0 0 16 16"><defs><linearGradient id="pg1" x1="0" y1="0" x2="1" y2="1"><stop offset="0" stop-color="#f0f0f0"/><stop offset="1" stop-color="#d8d8d8"/></linearGradient></defs><path d="M1.5 1.5 L9.0 1.5 L12.5 5 L12.5 15.5 L1.5 15.5 Z" fill="url(#pg1)" stroke="#b4b4b4" stroke-width="1.2"/><path d="M9.0 1.5 L9.0 5 L12.5 5" fill="#eaf4fc" stroke="#b4b4b4" stroke-width="0.9"/><path d="M7 13 L14 5 L15.5 6.5 L8.5 14.5 L6.5 15 Z" fill="#c0c0c0" stroke="#a8a8a8" stroke-width="0.8"/></svg>
<div style="position:absolute;left:429.70px;top:252.03px;width:80px;text-align:center;font-size:10px;line-height:10px;color:#8d8d8d;white-space:nowrap;letter-spacing:-0.3px;">Sửa</div>
<svg style="position:absolute;left:510.5px;top:232px" width="14" height="14" viewBox="0 0 16 16"><defs><linearGradient id="pg0" x1="0" y1="0" x2="1" y2="1"><stop offset="0" stop-color="#ffffff"/><stop offset="1" stop-color="#c4dcf4"/></linearGradient></defs><path d="M1.5 1.5 L9.0 1.5 L12.5 5 L12.5 15.5 L1.5 15.5 Z" fill="url(#pg0)" stroke="#3a92dc" stroke-width="1.2"/><path d="M9.0 1.5 L9.0 5 L12.5 5" fill="#eaf4fc" stroke="#3a92dc" stroke-width="0.9"/><path d="M6.8 13.2 L14.2 4.5 L16 6.2 L8.6 14.8 L6.3 15.3 Z" fill="#f2bc30" stroke="#a87010" stroke-width="0.8"/><path d="M6.3 15.3 L6.9 13.6 L8 14.7 Z" fill="#202020"/></svg>
<div style="position:absolute;left:478.10px;top:252.03px;width:80px;text-align:center;font-size:10px;line-height:10px;color:#262626;white-space:nowrap;letter-spacing:-0.3px;">Sửa nhanh</div>
<svg style="position:absolute;left:557.5px;top:232px" width="14" height="14" viewBox="0 0 16 16"><rect x="1.5" y="1.5" width="13" height="14" rx="0.5" fill="#8c8c8c" stroke="#707070" stroke-width="0.9"/><rect x="4" y="1.8" width="8" height="5" fill="#b4b4b4"/><rect x="9.5" y="2.5" width="1.6" height="3" fill="#707070"/><rect x="3.5" y="9" width="9" height="6.3" fill="#dcdcdc"/></svg>
<div style="position:absolute;left:524.50px;top:252.03px;width:80px;text-align:center;font-size:10px;line-height:10px;color:#8d8d8d;white-space:nowrap;letter-spacing:-0.3px;">Cất</div>
<svg style="position:absolute;left:588px;top:232px" width="14" height="14" viewBox="0 0 16 16"><defs><linearGradient id="pg1" x1="0" y1="0" x2="1" y2="1"><stop offset="0" stop-color="#f0f0f0"/><stop offset="1" stop-color="#d8d8d8"/></linearGradient></defs><path d="M1.5 1.5 L9.0 1.5 L12.5 5 L12.5 15.5 L1.5 15.5 Z" fill="url(#pg1)" stroke="#b4b4b4" stroke-width="1.2"/><path d="M9.0 1.5 L9.0 5 L12.5 5" fill="#eaf4fc" stroke="#b4b4b4" stroke-width="0.9"/><path d="M6.5 7.5 L14 15 M14 7.5 L6.5 15" stroke="#a0a0a0" stroke-width="3.2" stroke-linecap="round"/><path d="M6.5 7.5 L14 15 M14 7.5 L6.5 15" stroke="#c4c4c4" stroke-width="1.8" stroke-linecap="round"/></svg>
<div style="position:absolute;left:555.00px;top:252.03px;width:80px;text-align:center;font-size:10px;line-height:10px;color:#8d8d8d;white-space:nowrap;letter-spacing:-0.3px;">Xóa</div>
<svg style="position:absolute;left:623.5px;top:232px" width="14" height="14" viewBox="0 0 16 16"><path d="M6 6 C9 3 13.5 3.5 13.8 7.5 C14 10.5 11 12.5 9.5 15" fill="none" stroke="#8c8c8c" stroke-width="3"/><path d="M0.8 8.2 L5 1.2 L8.2 7.6 Z" fill="#9c9c9c" stroke="#8a8a8a" stroke-width="0.6"/><path d="M6 6 C9 3 13.5 3.5 13.8 7.5 C14 10.5 11 12.5 9.5 15" fill="none" stroke="#b0b0b0" stroke-width="1.4"/></svg>
<div style="position:absolute;left:590.90px;top:252.03px;width:80px;text-align:center;font-size:10px;line-height:10px;color:#8d8d8d;white-space:nowrap;letter-spacing:-0.3px;">Hoãn</div>
<svg style="position:absolute;left:664.5px;top:232px" width="14" height="14" viewBox="0 0 16 16"><path d="M2.5 14.2 L13 3.2" stroke="#3c9020" stroke-width="5" stroke-linecap="round"/><path d="M2.5 14.2 L13 3.2" stroke="#94dc58" stroke-width="3.2" stroke-linecap="round"/><path d="M1 16 L2.2 12.8 L4.4 15 Z" fill="#303030"/><path d="M9.8 10.3 L15.2 15.8 M15.2 10.3 L9.8 15.8" stroke="#e81818" stroke-width="2.2"/></svg>
<div style="position:absolute;left:631.80px;top:252.03px;width:80px;text-align:center;font-size:10px;line-height:10px;color:#262626;white-space:nowrap;letter-spacing:-0.3px;">Bỏ ghi</div>
<div style="position:absolute;left:695px;top:236px;width:1px;height:20px;background:#7ea6d6"></div>
<svg style="position:absolute;left:709.5px;top:232px" width="14" height="14" viewBox="0 0 16 16"><path d="M2 1.5 L11 1.5 L13.5 4 L13.5 15.5 L2 15.5 Z" fill="#f8faff" stroke="#7a80b8" stroke-width="1"/><path d="M4.8 7.6 C4.8 4.8 9.2 4 10.4 6.2" fill="none" stroke="#109a20" stroke-width="2.3"/><path d="M11 9 C11 11.8 6.6 12.6 5.4 10.4" fill="none" stroke="#109a20" stroke-width="2.3"/><path d="M8 5 L12 3.6 L11.6 8 Z M7.8 11.6 L3.8 13 L4.2 8.6 Z" fill="#109a20"/></svg>
<div style="position:absolute;left:676.20px;top:252.03px;width:80px;text-align:center;font-size:10px;line-height:10px;color:#262626;white-space:nowrap;letter-spacing:-0.3px;">Nạp</div>
<svg style="position:absolute;left:750px;top:232px" width="14" height="14" viewBox="0 0 16 16"><path d="M5.5 5.5 L13.5 14.2" stroke="#a06c18" stroke-width="2.8" stroke-linecap="round"/><path d="M5.5 5.5 L13.5 14.2" stroke="#eac462" stroke-width="1.4" stroke-linecap="round"/><path d="M0.8 4.5 L4.2 1 L7.8 4 L4.4 7.8 Z" fill="#a8a8a8" stroke="#6c6c6c" stroke-width="0.9"/><path d="M3 13 L12 4.2" stroke="#2e88de" stroke-width="3"/><path d="M3 13 L12 4.2" stroke="#c8e6ff" stroke-width="1.2"/><path d="M11.2 1.6 A3 3 0 1 0 14.6 5" fill="none" stroke="#2e88de" stroke-width="1.8"/><path d="M4.8 15.4 A3 3 0 1 0 1.4 12" fill="none" stroke="#2e88de" stroke-width="1.8"/></svg>
<div style="position:absolute;left:718.50px;top:252.03px;width:80px;text-align:center;font-size:10px;line-height:10px;color:#262626;white-space:nowrap;letter-spacing:-0.3px;">Tiện ích</div>
<svg style="position:absolute;left:783.5px;top:247px" width="5" height="2.5" viewBox="0 0 5 2.5"><path d="M0 0 L5 0 L2.5 2.5 Z" fill="#000"/></svg>
<svg style="position:absolute;left:802px;top:232px" width="14" height="14" viewBox="0 0 16 16"><path d="M14.2 2 L14.2 15.5 L0.6 15.5 Z" fill="#e8b84c" stroke="#a06a18" stroke-width="0.9" stroke-linejoin="round"/><path d="M11.2 9.3 L11.2 12.6 L7.9 12.6 Z" fill="#c9dbf0" stroke="#a06a18" stroke-width="0.6"/><path d="M3.5 15 L3.5 14 M5.5 15 L5.5 14 M7.5 15 L7.5 14 M9.5 15 L9.5 14 M11.5 15 L11.5 14 M13.8 4.5 L12.8 4.5 M13.8 6.5 L12.8 6.5 M13.8 8.5 L12.8 8.5 M13.8 10.5 L12.8 10.5 M13.8 12.5 L12.8 12.5" stroke="#8a5810" stroke-width="0.7"/></svg>
<div style="position:absolute;left:768.40px;top:252.03px;width:80px;text-align:center;font-size:10px;line-height:10px;color:#262626;white-space:nowrap;letter-spacing:-0.3px;">Mẫu</div>
<svg style="position:absolute;left:826px;top:247px" width="5" height="2.5" viewBox="0 0 5 2.5"><path d="M0 0 L5 0 L2.5 2.5 Z" fill="#000"/></svg>
<div style="position:absolute;left:834px;top:236px;width:1px;height:20px;background:#7ea6d6"></div>
<svg style="position:absolute;left:843px;top:232px" width="14" height="14" viewBox="0 0 16 16"><path d="M2.5 2.5 L9.5 1.2 L11 6.5 L4 7.8 Z" fill="#58b4ec" stroke="#3a8ed0" stroke-width="0.6"/><rect x="0.5" y="5.5" width="15" height="10" rx="3.2" fill="#bcb8e6" stroke="#8a84c0" stroke-width="0.9"/><path d="M5.5 6 L5.5 15" stroke="#e0def6" stroke-width="1.2"/><circle cx="10.5" cy="10" r="0.9" fill="#6a64a0"/></svg>
<div style="position:absolute;left:810.60px;top:252.03px;width:80px;text-align:center;font-size:10px;line-height:10px;color:#262626;white-space:nowrap;letter-spacing:-0.3px;">In</div>
<svg style="position:absolute;left:861.5px;top:247px" width="5" height="2.5" viewBox="0 0 5 2.5"><path d="M0 0 L5 0 L2.5 2.5 Z" fill="#000"/></svg>
<div style="position:absolute;left:871px;top:236px;width:1px;height:20px;background:#7ea6d6"></div>
<svg style="position:absolute;left:894px;top:232px" width="14" height="14" viewBox="0 0 16 16"><rect x="0.5" y="3.5" width="15" height="11.5" fill="#f28020" stroke="#fff" stroke-width="0.9"/><path d="M1 4 L8 10 L15 4 M1 14.5 L6 9 M15 14.5 L10 9" fill="none" stroke="#fff" stroke-width="1"/></svg>
<div style="position:absolute;left:862.50px;top:252.03px;width:80px;text-align:center;font-size:10px;line-height:10px;color:#262626;white-space:nowrap;letter-spacing:-0.3px;">Phản hồi</div>
<div style="position:absolute;left:931px;top:236px;width:1px;height:20px;background:#7ea6d6"></div>
<svg style="position:absolute;left:945px;top:232px" width="14" height="14" viewBox="0 0 16 16"><defs><radialGradient id="hg" cx="0.4" cy="0.3" r="0.8"><stop offset="0" stop-color="#a8d4ff"/><stop offset="1" stop-color="#2a78d8"/></radialGradient></defs><circle cx="8" cy="8.5" r="7" fill="url(#hg)" stroke="#1a58a8" stroke-width="1"/><text x="8" y="12.6" font-size="11" font-weight="bold" text-anchor="middle" fill="#fff" font-family="Liberation Sans">?</text></svg>
<div style="position:absolute;left:913.00px;top:252.03px;width:80px;text-align:center;font-size:10px;line-height:10px;color:#262626;white-space:nowrap;letter-spacing:-0.3px;">Giúp</div>
<svg style="position:absolute;left:984px;top:232px" width="14" height="14" viewBox="0 0 16 16"><rect x="1" y="1.5" width="14.5" height="14.5" rx="1.5" fill="#d84028" stroke="#fff" stroke-width="1"/><circle cx="8.25" cy="8.75" r="4.3" fill="none" stroke="#fff" stroke-width="1.7"/><path d="M8.25 6.6 L8.25 10.9" stroke="#fff" stroke-width="1.8"/></svg>
<div style="position:absolute;left:950.70px;top:252.03px;width:80px;text-align:center;font-size:10px;line-height:10px;color:#262626;white-space:nowrap;letter-spacing:-0.3px;">Đóng</div>
<div style="position:absolute;left:338.00px;top:277.31px;font-size:18.3px;line-height:18.3px;font-weight:bold;color:#000;white-space:nowrap;">Phiếu xuất kho</div>
<div style="position:absolute;left:488px;top:279px;width:175px;height:19px;background:#e6e6e6;box-sizing:border-box;border:1px solid #8ab0de"></div>
<div style="position:absolute;left:491.00px;top:283.64px;font-size:10px;line-height:10px;color:#262626;white-space:nowrap;letter-spacing:-0.3px;">2. Sản xuất</div>
<div style="position:absolute;left:684px;top:279px;width:189px;height:19px;background:#e6e6e6;box-sizing:border-box;border:1px solid #8ab0de"></div>
<div style="position:absolute;left:689.00px;top:283.64px;font-size:10px;line-height:10px;color:#8a8a8a;white-space:nowrap;letter-spacing:-0.3px;font-style:italic;">Nhập lệnh sản xuất</div>
<div style="position:absolute;left:336px;top:314px;width:627px;height:121px;box-sizing:border-box;border:1px solid #8cb0dc"></div>
<div style="position:absolute;left:338.6px;top:308px;width:80px;height:12px;background:#c9dbf0"></div>
<div style="position:absolute;left:341.60px;top:307.87px;font-size:9.6px;line-height:9.6px;font-weight:bold;color:#262626;white-space:nowrap;">Thông tin chung</div>
<div style="position:absolute;left:343.50px;top:326.54px;font-size:10px;line-height:10px;color:#262626;white-space:nowrap;letter-spacing:-0.3px;">Người nhận</div>
<div style="position:absolute;left:343.50px;top:347.54px;font-size:10px;line-height:10px;color:#262626;white-space:nowrap;letter-spacing:-0.3px;">Bộ phận</div>
<div style="position:absolute;left:343.50px;top:369.54px;font-size:10px;line-height:10px;color:#262626;white-space:nowrap;letter-spacing:-0.3px;">Lý do xuất</div>
<div style="position:absolute;left:343.50px;top:390.94px;font-size:10px;line-height:10px;color:#262626;white-space:nowrap;letter-spacing:-0.3px;">Kèm theo</div>
<div style="position:absolute;left:343.50px;top:412.24px;font-size:10px;line-height:10px;color:#262626;white-space:nowrap;letter-spacing:-0.3px;">Tham chiếu</div>
<div style="position:absolute;left:422px;top:321px;width:166px;height:18px;background:#e6e6e6;box-sizing:border-box;border:1px solid #8ab0de"></div>
<div style="position:absolute;left:427.00px;top:325.14px;font-size:10px;line-height:10px;color:#262626;white-space:nowrap;letter-spacing:-0.3px;">VNTAN</div>
<div style="position:absolute;left:593px;top:321px;width:364px;height:18px;background:#e6e6e6;box-sizing:border-box;border:1px solid #8ab0de"></div>
<div style="position:absolute;left:597.00px;top:325.14px;font-size:10px;line-height:10px;color:#262626;white-space:nowrap;letter-spacing:-0.3px;">Vũ Ngọc Tấn</div>
<div style="position:absolute;left:422px;top:342px;width:535px;height:19px;background:#e6e6e6;box-sizing:border-box;border:1px solid #8ab0de"></div>
<div style="position:absolute;left:422px;top:364px;width:535px;height:18px;background:#e6e6e6;box-sizing:border-box;border:1px solid #8ab0de"></div>
<div style="position:absolute;left:426.00px;top:368.14px;font-size:10px;line-height:10px;color:#262626;white-space:nowrap;letter-spacing:-0.3px;">Xuất sản xuất</div>
<div style="position:absolute;left:422px;top:385px;width:470px;height:18px;background:#e6e6e6;box-sizing:border-box;border:1px solid #8ab0de"></div>
<div style="position:absolute;left:896.70px;top:390.94px;font-size:10px;line-height:10px;color:#262626;white-space:nowrap;letter-spacing:-0.3px;">chứng từ gốc</div>
<div style="position:absolute;left:423.30px;top:412.24px;font-size:10px;line-height:10px;color:#0000ee;white-space:nowrap;letter-spacing:-0.3px;text-decoration:underline;">LSX0001</div>
<div style="position:absolute;left:466.00px;top:412.24px;font-size:10px;line-height:10px;color:#0000ee;white-space:nowrap;letter-spacing:-0.3px;text-decoration:underline;">...</div>
<div style="position:absolute;left:936px;top:407px;width:21px;height:20px;border:1px solid #8ab0de;background:#c9dbf0"></div>
<svg style="position:absolute;left:938.5px;top:409.5px" width="15" height="15" viewBox="0 0 17 17"><circle cx="7" cy="5.8" r="5.3" fill="#d4d4d4" stroke="#bdbdbd" stroke-width="1"/><path d="M11.3 10.3 L15 14.8" stroke="#a4a4a4" stroke-width="2.6" stroke-linecap="round"/><path d="M4.5 6.5 H7.5 V9.5 H10.5 V12.5 H7.5 V15.5 H4.5 V12.5 H1.5 V9.5 H4.5 Z" fill="#cacaca" stroke="#7c7c7c" stroke-width="1"/></svg>
<div style="position:absolute;left:972px;top:313px;width:179px;height:122px;box-sizing:border-box;border:1px solid #8cb0dc"></div>
<div style="position:absolute;left:975.3px;top:307px;width:49px;height:12px;background:#c9dbf0"></div>
<div style="position:absolute;left:978.30px;top:307.87px;font-size:9.6px;line-height:9.6px;font-weight:bold;color:#262626;white-space:nowrap;">Chứng từ</div>
<div style="position:absolute;left:980.00px;top:326.54px;font-size:10px;line-height:10px;color:#262626;white-space:nowrap;letter-spacing:-0.3px;">Ngày hạch toán</div>
<div style="position:absolute;left:980.00px;top:347.54px;font-size:10px;line-height:10px;color:#262626;white-space:nowrap;letter-spacing:-0.3px;">Ngày chứng từ</div>
<div style="position:absolute;left:980.00px;top:369.24px;font-size:10px;line-height:10px;color:#262626;white-space:nowrap;letter-spacing:-0.3px;">Số chứng từ</div>
<div style="position:absolute;left:1055px;top:321px;width:91px;height:19px;background:#e6e6e6;box-sizing:border-box;border:1px solid #8ab0de"></div>
<div style="position:absolute;left:1059.00px;top:325.64px;font-size:10px;line-height:10px;color:#262626;white-space:nowrap;letter-spacing:-0.3px;">23/01/2019</div>
<div style="position:absolute;left:1127px;top:322px;width:18px;height:17px;background:#a9c4e4"></div>
<svg style="position:absolute;left:1127.5px;top:322px" width="16" height="16" viewBox="0 0 16 16"><circle cx="8" cy="7.5" r="6.2" fill="#d6f0fc" stroke="#8c8c8c" stroke-width="1.3"/><path d="M8 7.5 L5.8 5.8 M8 7.5 L10.5 5.5" stroke="#404850" stroke-width="0.9" fill="none"/><circle cx="8" cy="3" r="0.7" fill="#f06040"/><circle cx="8" cy="12" r="0.7" fill="#f06040"/><circle cx="3.6" cy="7.5" r="0.7" fill="#f06040"/><circle cx="12.4" cy="7.5" r="0.7" fill="#f06040"/></svg>
<div style="position:absolute;left:1055px;top:342.5px;width:91px;height:18px;background:#e6e6e6;box-sizing:border-box;border:1px solid #8ab0de"></div>
<div style="position:absolute;left:1059.00px;top:346.64px;font-size:10px;line-height:10px;color:#262626;white-space:nowrap;letter-spacing:-0.3px;">23/01/2019</div>
<div style="position:absolute;left:1055px;top:364px;width:91px;height:18px;background:#e6e6e6;box-sizing:border-box;border:1px solid #8ab0de"></div>
<div style="position:absolute;left:1059.00px;top:368.14px;font-size:10px;line-height:10px;color:#262626;white-space:nowrap;letter-spacing:-0.3px;">XK00013</div>
<div style="position:absolute;left:721px;top:436px;width:44px;height:7px;background:#adc8e6;border:1px solid #86a9d8"></div>
<svg style="position:absolute;left:739px;top:437px" width="8" height="4" viewBox="0 0 8 4"><path d="M0 4 L4 0 L8 4 Z" fill="#fff"/></svg>
<div style="position:absolute;left:334.5px;top:443px;width:205px;height:18px;background:#c9dbf0;border:1px solid #8cb0dc;border-bottom:none"></div>
<div style="position:absolute;left:334.5px;top:443px;width:75px;height:18px;background:#ffe6a0;border:1px solid #8cb0dc;border-bottom:none"></div>
<div style="position:absolute;left:344.00px;top:447.20px;font-size:10.4px;line-height:10.4px;font-weight:bold;color:#262626;white-space:nowrap;"><u>1</u> Hàng tiền</div>
<div style="position:absolute;left:421.90px;top:447.54px;font-size:10px;line-height:10px;color:#262626;white-space:nowrap;letter-spacing:-0.3px;"><u>2</u></div>
<div style="position:absolute;left:432.70px;top:447.54px;font-size:10px;line-height:10px;color:#262626;white-space:nowrap;letter-spacing:-0.3px;">Thống kê</div>
<div style="position:absolute;left:495.00px;top:447.54px;font-size:10px;line-height:10px;color:#262626;white-space:nowrap;letter-spacing:-0.3px;"><u>3</u></div>
<div style="position:absolute;left:505.40px;top:447.54px;font-size:10px;line-height:10px;color:#262626;white-space:nowrap;letter-spacing:-0.3px;">Khác</div>
<div style="position:absolute;left:334px;top:460px;width:818px;height:348px;background:#fff;border:1px solid #8cb0dc;border-right:none"></div>
<div style="position:absolute;left:1043px;top:478px;width:109px;height:298px;background:#e4e4e4"></div>
<div style="position:absolute;left:335px;top:461px;width:817px;height:17px;background:#adc8e6;border-bottom:1px solid #8cb0dc"></div>
<div style="position:absolute;left:439px;top:461px;width:1px;height:17px;background:#8cb0dc"></div>
<div style="position:absolute;left:714px;top:461px;width:1px;height:17px;background:#8cb0dc"></div>
<div style="position:absolute;left:797px;top:461px;width:1px;height:17px;background:#8cb0dc"></div>
<div style="position:absolute;left:946px;top:461px;width:1px;height:17px;background:#8cb0dc"></div>
<div style="position:absolute;left:1042px;top:461px;width:1px;height:17px;background:#8cb0dc"></div>
<div style="position:absolute;left:1138px;top:461px;width:1px;height:17px;background:#8cb0dc"></div>
<div style="position:absolute;left:1151px;top:460px;width:1px;height:348px;background:#8cb0dc"></div>
<div style="position:absolute;left:364.40px;top:464.84px;font-size:10px;line-height:10px;color:#262626;white-space:nowrap;letter-spacing:-0.3px;">Mã hàng</div>
<div style="position:absolute;left:507.00px;top:464.84px;font-size:10px;line-height:10px;color:#262626;white-space:nowrap;letter-spacing:-0.3px;">Tên hàng</div>
<div style="position:absolute;left:656.00px;top:464.84px;font-size:10px;line-height:10px;color:#262626;white-space:nowrap;letter-spacing:-0.3px;">Kho</div>
<div style="position:absolute;left:737.40px;top:464.84px;font-size:10px;line-height:10px;color:#262626;white-space:nowrap;letter-spacing:-0.3px;">TK Nợ</div>
<div style="position:absolute;left:821.60px;top:464.84px;font-size:10px;line-height:10px;color:#262626;white-space:nowrap;letter-spacing:-0.3px;">TK Có</div>
<div style="position:absolute;left:899.50px;top:464.84px;font-size:10px;line-height:10px;color:#262626;white-space:nowrap;letter-spacing:-0.3px;">ĐVT</div>
<div style="position:absolute;left:971.30px;top:464.84px;font-size:10px;line-height:10px;color:#262626;white-space:nowrap;letter-spacing:-0.3px;">Số lượng</div>
<div style="position:absolute;left:1068.00px;top:464.84px;font-size:10px;line-height:10px;color:#262626;white-space:nowrap;letter-spacing:-0.3px;">Đơn giá</div>
<div style="position:absolute;left:432px;top:465px;width:4px;height:1px;background:#1a1a1a"></div>
<div style="position:absolute;left:432px;top:465px;width:1px;height:4px;background:#1a1a1a"></div>
<div style="position:absolute;left:435px;top:465px;width:1px;height:4px;background:#1a1a1a"></div>
<div style="position:absolute;left:431px;top:469px;width:6px;height:1px;background:#1a1a1a"></div>
<div style="position:absolute;left:433px;top:470px;width:1px;height:3px;background:#1a1a1a"></div>
<div style="position:absolute;left:614px;top:469px;width:2px;height:1px;background:#1a1a1a"></div>
<div style="position:absolute;left:616px;top:466px;width:1px;height:6px;background:#1a1a1a"></div>
<div style="position:absolute;left:616px;top:467px;width:6px;height:1px;background:#1a1a1a"></div>
<div style="position:absolute;left:616px;top:470px;width:6px;height:1px;background:#1a1a1a"></div>
<div style="position:absolute;left:621px;top:467px;width:1px;height:4px;background:#1a1a1a"></div>
<div style="position:absolute;left:706px;top:469px;width:2px;height:1px;background:#1a1a1a"></div>
<div style="position:absolute;left:708px;top:466px;width:1px;height:6px;background:#1a1a1a"></div>
<div style="position:absolute;left:708px;top:467px;width:6px;height:1px;background:#1a1a1a"></div>
<div style="position:absolute;left:708px;top:470px;width:6px;height:1px;background:#1a1a1a"></div>
<div style="position:absolute;left:713px;top:467px;width:1px;height:4px;background:#1a1a1a"></div>
<div style="position:absolute;left:789px;top:469px;width:2px;height:1px;background:#1a1a1a"></div>
<div style="position:absolute;left:791px;top:466px;width:1px;height:6px;background:#1a1a1a"></div>
<div style="position:absolute;left:791px;top:467px;width:6px;height:1px;background:#1a1a1a"></div>
<div style="position:absolute;left:791px;top:470px;width:6px;height:1px;background:#1a1a1a"></div>
<div style="position:absolute;left:796px;top:467px;width:1px;height:4px;background:#1a1a1a"></div>
<div style="position:absolute;left:872px;top:469px;width:2px;height:1px;background:#1a1a1a"></div>
<div style="position:absolute;left:874px;top:466px;width:1px;height:6px;background:#1a1a1a"></div>
<div style="position:absolute;left:874px;top:467px;width:6px;height:1px;background:#1a1a1a"></div>
<div style="position:absolute;left:874px;top:470px;width:6px;height:1px;background:#1a1a1a"></div>
<div style="position:absolute;left:879px;top:467px;width:1px;height:4px;background:#1a1a1a"></div>
<div style="position:absolute;left:937px;top:469px;width:2px;height:1px;background:#1a1a1a"></div>
<div style="position:absolute;left:939px;top:466px;width:1px;height:6px;background:#1a1a1a"></div>
<div style="position:absolute;left:939px;top:467px;width:6px;height:1px;background:#1a1a1a"></div>
<div style="position:absolute;left:939px;top:470px;width:6px;height:1px;background:#1a1a1a"></div>
<div style="position:absolute;left:944px;top:467px;width:1px;height:4px;background:#1a1a1a"></div>
<div style="position:absolute;left:1034px;top:469px;width:2px;height:1px;background:#1a1a1a"></div>
<div style="position:absolute;left:1036px;top:466px;width:1px;height:6px;background:#1a1a1a"></div>
<div style="position:absolute;left:1036px;top:467px;width:6px;height:1px;background:#1a1a1a"></div>
<div style="position:absolute;left:1036px;top:470px;width:6px;height:1px;background:#1a1a1a"></div>
<div style="position:absolute;left:1041px;top:467px;width:1px;height:4px;background:#1a1a1a"></div>
<div style="position:absolute;left:1130px;top:469px;width:2px;height:1px;background:#1a1a1a"></div>
<div style="position:absolute;left:1132px;top:466px;width:1px;height:6px;background:#1a1a1a"></div>
<div style="position:absolute;left:1132px;top:467px;width:6px;height:1px;background:#1a1a1a"></div>
<div style="position:absolute;left:1132px;top:470px;width:6px;height:1px;background:#1a1a1a"></div>
<div style="position:absolute;left:1137px;top:467px;width:1px;height:4px;background:#1a1a1a"></div>
<div style="position:absolute;left:335px;top:514px;width:817px;height:1px;border-top:1px dotted #bdbdbd"></div>
<div style="position:absolute;left:335px;top:532px;width:817px;height:1px;border-top:1px dotted #bdbdbd"></div>
<div style="position:absolute;left:335px;top:550px;width:817px;height:1px;border-top:1px dotted #bdbdbd"></div>
<div style="position:absolute;left:335px;top:567px;width:817px;height:1px;border-top:1px dotted #bdbdbd"></div>
<div style="position:absolute;left:335px;top:585px;width:817px;height:1px;border-top:1px dotted #bdbdbd"></div>
<div style="position:absolute;left:335px;top:621px;width:817px;height:1px;border-top:1px dotted #bdbdbd"></div>
<div style="position:absolute;left:335px;top:638px;width:817px;height:1px;border-top:1px dotted #bdbdbd"></div>
<div style="position:absolute;left:335px;top:656px;width:817px;height:1px;border-top:1px dotted #bdbdbd"></div>
<div style="position:absolute;left:335px;top:674px;width:817px;height:1px;border-top:1px dotted #bdbdbd"></div>
<div style="position:absolute;left:335px;top:692px;width:817px;height:1px;border-top:1px dotted #bdbdbd"></div>
<div style="position:absolute;left:335px;top:728px;width:817px;height:1px;border-top:1px dotted #bdbdbd"></div>
<div style="position:absolute;left:335px;top:745px;width:817px;height:1px;border-top:1px dotted #bdbdbd"></div>
<div style="position:absolute;left:335px;top:763px;width:817px;height:1px;border-top:1px dotted #bdbdbd"></div>
<div style="position:absolute;left:439px;top:478px;width:1px;height:298px;background:#7a7a7a"></div>
<div style="position:absolute;left:714px;top:478px;width:1px;height:298px;border-left:1px dotted #bdbdbd"></div>
<div style="position:absolute;left:797px;top:478px;width:1px;height:298px;border-left:1px dotted #bdbdbd"></div>
<div style="position:absolute;left:946px;top:478px;width:1px;height:298px;border-left:1px dotted #bdbdbd"></div>
<div style="position:absolute;left:1138px;top:478px;width:1px;height:298px;border-left:1px dotted #bdbdbd"></div>
<div style="position:absolute;left:340.00px;top:482.74px;font-size:10px;line-height:10px;color:#262626;white-space:nowrap;letter-spacing:-0.3px;">CASE</div>
<div style="position:absolute;left:444.50px;top:482.74px;font-size:10px;line-height:10px;color:#262626;white-space:nowrap;letter-spacing:-0.3px;">Case vicom</div>
<div style="position:absolute;left:628.20px;top:482.74px;font-size:10px;line-height:10px;color:#262626;white-space:nowrap;letter-spacing:-0.3px;">KNVL</div>
<div style="position:absolute;left:717.50px;top:482.74px;font-size:10px;line-height:10px;color:#262626;white-space:nowrap;letter-spacing:-0.3px;">621</div>
<div style="position:absolute;left:802.40px;top:482.74px;font-size:10px;line-height:10px;color:#262626;white-space:nowrap;letter-spacing:-0.3px;">152</div>
<div style="position:absolute;left:885.80px;top:482.74px;font-size:10px;line-height:10px;color:#262626;white-space:nowrap;letter-spacing:-0.3px;">Chiếc</div>
<div style="position:absolute;left:980.50px;top:482.74px;width:60px;text-align:right;font-size:10px;line-height:10px;color:#262626;white-space:nowrap;letter-spacing:-0.3px;">12,00</div>
<div style="position:absolute;left:1075.50px;top:482.74px;width:60px;text-align:right;font-size:10px;line-height:10px;color:#262626;white-space:nowrap;letter-spacing:-0.3px;">0</div>
<div style="position:absolute;left:340.00px;top:500.79px;font-size:10px;line-height:10px;color:#262626;white-space:nowrap;letter-spacing:-0.3px;">CHUOT</div>
<div style="position:absolute;left:444.50px;top:500.79px;font-size:10px;line-height:10px;color:#262626;white-space:nowrap;letter-spacing:-0.3px;">Chuột Mitsumi</div>
<div style="position:absolute;left:628.20px;top:500.79px;font-size:10px;line-height:10px;color:#262626;white-space:nowrap;letter-spacing:-0.3px;">KNVL</div>
<div style="position:absolute;left:717.50px;top:500.79px;font-size:10px;line-height:10px;color:#262626;white-space:nowrap;letter-spacing:-0.3px;">621</div>
<div style="position:absolute;left:802.40px;top:500.79px;font-size:10px;line-height:10px;color:#262626;white-space:nowrap;letter-spacing:-0.3px;">152</div>
<div style="position:absolute;left:885.80px;top:500.79px;font-size:10px;line-height:10px;color:#262626;white-space:nowrap;letter-spacing:-0.3px;">Chiếc</div>
<div style="position:absolute;left:980.50px;top:500.79px;width:60px;text-align:right;font-size:10px;line-height:10px;color:#262626;white-space:nowrap;letter-spacing:-0.3px;">12,00</div>
<div style="position:absolute;left:1075.50px;top:500.79px;width:60px;text-align:right;font-size:10px;line-height:10px;color:#262626;white-space:nowrap;letter-spacing:-0.3px;">0</div>
<div style="position:absolute;left:340.00px;top:518.83px;font-size:10px;line-height:10px;color:#262626;white-space:nowrap;letter-spacing:-0.3px;">MAN_HINH</div>
<div style="position:absolute;left:444.50px;top:518.83px;font-size:10px;line-height:10px;color:#262626;white-space:nowrap;letter-spacing:-0.3px;">Màn hình Samsung</div>
<div style="position:absolute;left:628.20px;top:518.83px;font-size:10px;line-height:10px;color:#262626;white-space:nowrap;letter-spacing:-0.3px;">KNVL</div>
<div style="position:absolute;left:717.50px;top:518.83px;font-size:10px;line-height:10px;color:#262626;white-space:nowrap;letter-spacing:-0.3px;">621</div>
<div style="position:absolute;left:802.40px;top:518.83px;font-size:10px;line-height:10px;color:#262626;white-space:nowrap;letter-spacing:-0.3px;">152</div>
<div style="position:absolute;left:885.80px;top:518.83px;font-size:10px;line-height:10px;color:#262626;white-space:nowrap;letter-spacing:-0.3px;">Chiếc</div>
<div style="position:absolute;left:980.50px;top:518.83px;width:60px;text-align:right;font-size:10px;line-height:10px;color:#262626;white-space:nowrap;letter-spacing:-0.3px;">12,00</div>
<div style="position:absolute;left:1075.50px;top:518.83px;width:60px;text-align:right;font-size:10px;line-height:10px;color:#262626;white-space:nowrap;letter-spacing:-0.3px;">0</div>
<div style="position:absolute;left:340.00px;top:536.88px;font-size:10px;line-height:10px;color:#262626;white-space:nowrap;letter-spacing:-0.3px;">BAN_PHIM</div>
<div style="position:absolute;left:444.50px;top:536.88px;font-size:10px;line-height:10px;color:#262626;white-space:nowrap;letter-spacing:-0.3px;">Bàn phím Mitsumi</div>
<div style="position:absolute;left:628.20px;top:536.88px;font-size:10px;line-height:10px;color:#262626;white-space:nowrap;letter-spacing:-0.3px;">KNVL</div>
<div style="position:absolute;left:717.50px;top:536.88px;font-size:10px;line-height:10px;color:#262626;white-space:nowrap;letter-spacing:-0.3px;">621</div>
<div style="position:absolute;left:802.40px;top:536.88px;font-size:10px;line-height:10px;color:#262626;white-space:nowrap;letter-spacing:-0.3px;">152</div>
<div style="position:absolute;left:885.80px;top:536.88px;font-size:10px;line-height:10px;color:#262626;white-space:nowrap;letter-spacing:-0.3px;">Chiếc</div>
<div style="position:absolute;left:980.50px;top:536.88px;width:60px;text-align:right;font-size:10px;line-height:10px;color:#262626;white-space:nowrap;letter-spacing:-0.3px;">12,00</div>
<div style="position:absolute;left:1075.50px;top:536.88px;width:60px;text-align:right;font-size:10px;line-height:10px;color:#262626;white-space:nowrap;letter-spacing:-0.3px;">0</div>
<div style="position:absolute;left:335px;top:776px;width:816px;height:15px;background:#eeeeee"></div>
<div style="position:absolute;left:335px;top:776px;width:104px;height:15px;background:#d4d4d4"></div>
<div style="position:absolute;left:439px;top:776px;width:1px;height:15px;background:#a0a0a0"></div>
<div style="position:absolute;left:947px;top:776px;width:96px;height:15px;background:#d4d4d4"></div>
<div style="position:absolute;left:946px;top:776px;width:1px;height:15px;background:#8cb0dc"></div>
<div style="position:absolute;left:1042px;top:776px;width:1px;height:15px;background:#8cb0dc"></div>
<div style="position:absolute;left:1139px;top:776px;width:12px;height:15px;background:#d4d4d4"></div>
<div style="position:absolute;left:1138px;top:776px;width:1px;height:15px;background:#8cb0dc"></div>
<div style="position:absolute;left:1154px;top:824px;width:2px;height:2px;background:#3a4a6a"></div>
<div style="position:absolute;left:338.20px;top:779.03px;font-size:10px;line-height:10px;color:#262626;white-space:nowrap;letter-spacing:-0.3px;">Số dòng = 4</div>
<div style="position:absolute;left:980.00px;top:779.03px;width:60px;text-align:right;font-size:10px;line-height:10px;color:#262626;white-space:nowrap;letter-spacing:-0.3px;">48,00</div>
<div style="position:absolute;left:334px;top:791px;width:818px;height:17px;background:#d6d6d6;border:1px solid #8cb0dc"></div>
<div style="position:absolute;left:335px;top:792px;width:461px;height:15px;background:#adc8e6"></div>
<div style="position:absolute;left:1137px;top:792px;width:14px;height:15px;background:#adc8e6"></div>
<svg style="position:absolute;left:339px;top:796px" width="5" height="7" viewBox="0 0 5 7"><path d="M5 0 L0 3.5 L5 7 Z" fill="#000"/></svg>
<svg style="position:absolute;left:1142px;top:796px" width="5" height="7" viewBox="0 0 5 7"><path d="M0 0 L5 3.5 L0 7 Z" fill="#000"/></svg>
<div style="position:absolute;left:357px;top:27px;width:55px;height:45px;border:3px solid #ed1c24"></div>
<div style="position:absolute;left:386px;top:72px;width:8px;height:117px;background:#ed1c24"></div>
<svg style="position:absolute;left:383px;top:189px" width="14" height="12" viewBox="0 0 14 12"><path d="M0.5 0 L13.5 0 L9.5 12 L4.5 12 Z" fill="#ed1c24"/></svg>
<svg style="position:absolute;left:369px;top:7px" width="26" height="22" viewBox="0 0 26 22"><path d="M6 0.8 L20 0.8 L20 10.2 L25.3 10.2 L17.5 21 L8.5 21 L0.7 10.2 L6 10.2 Z" fill="#ed1c24"/></svg>
<div style="position:absolute;left:137px;top:167px;width:69px;height:25px;border:3px solid #ed1c24"></div>
</body></html>
